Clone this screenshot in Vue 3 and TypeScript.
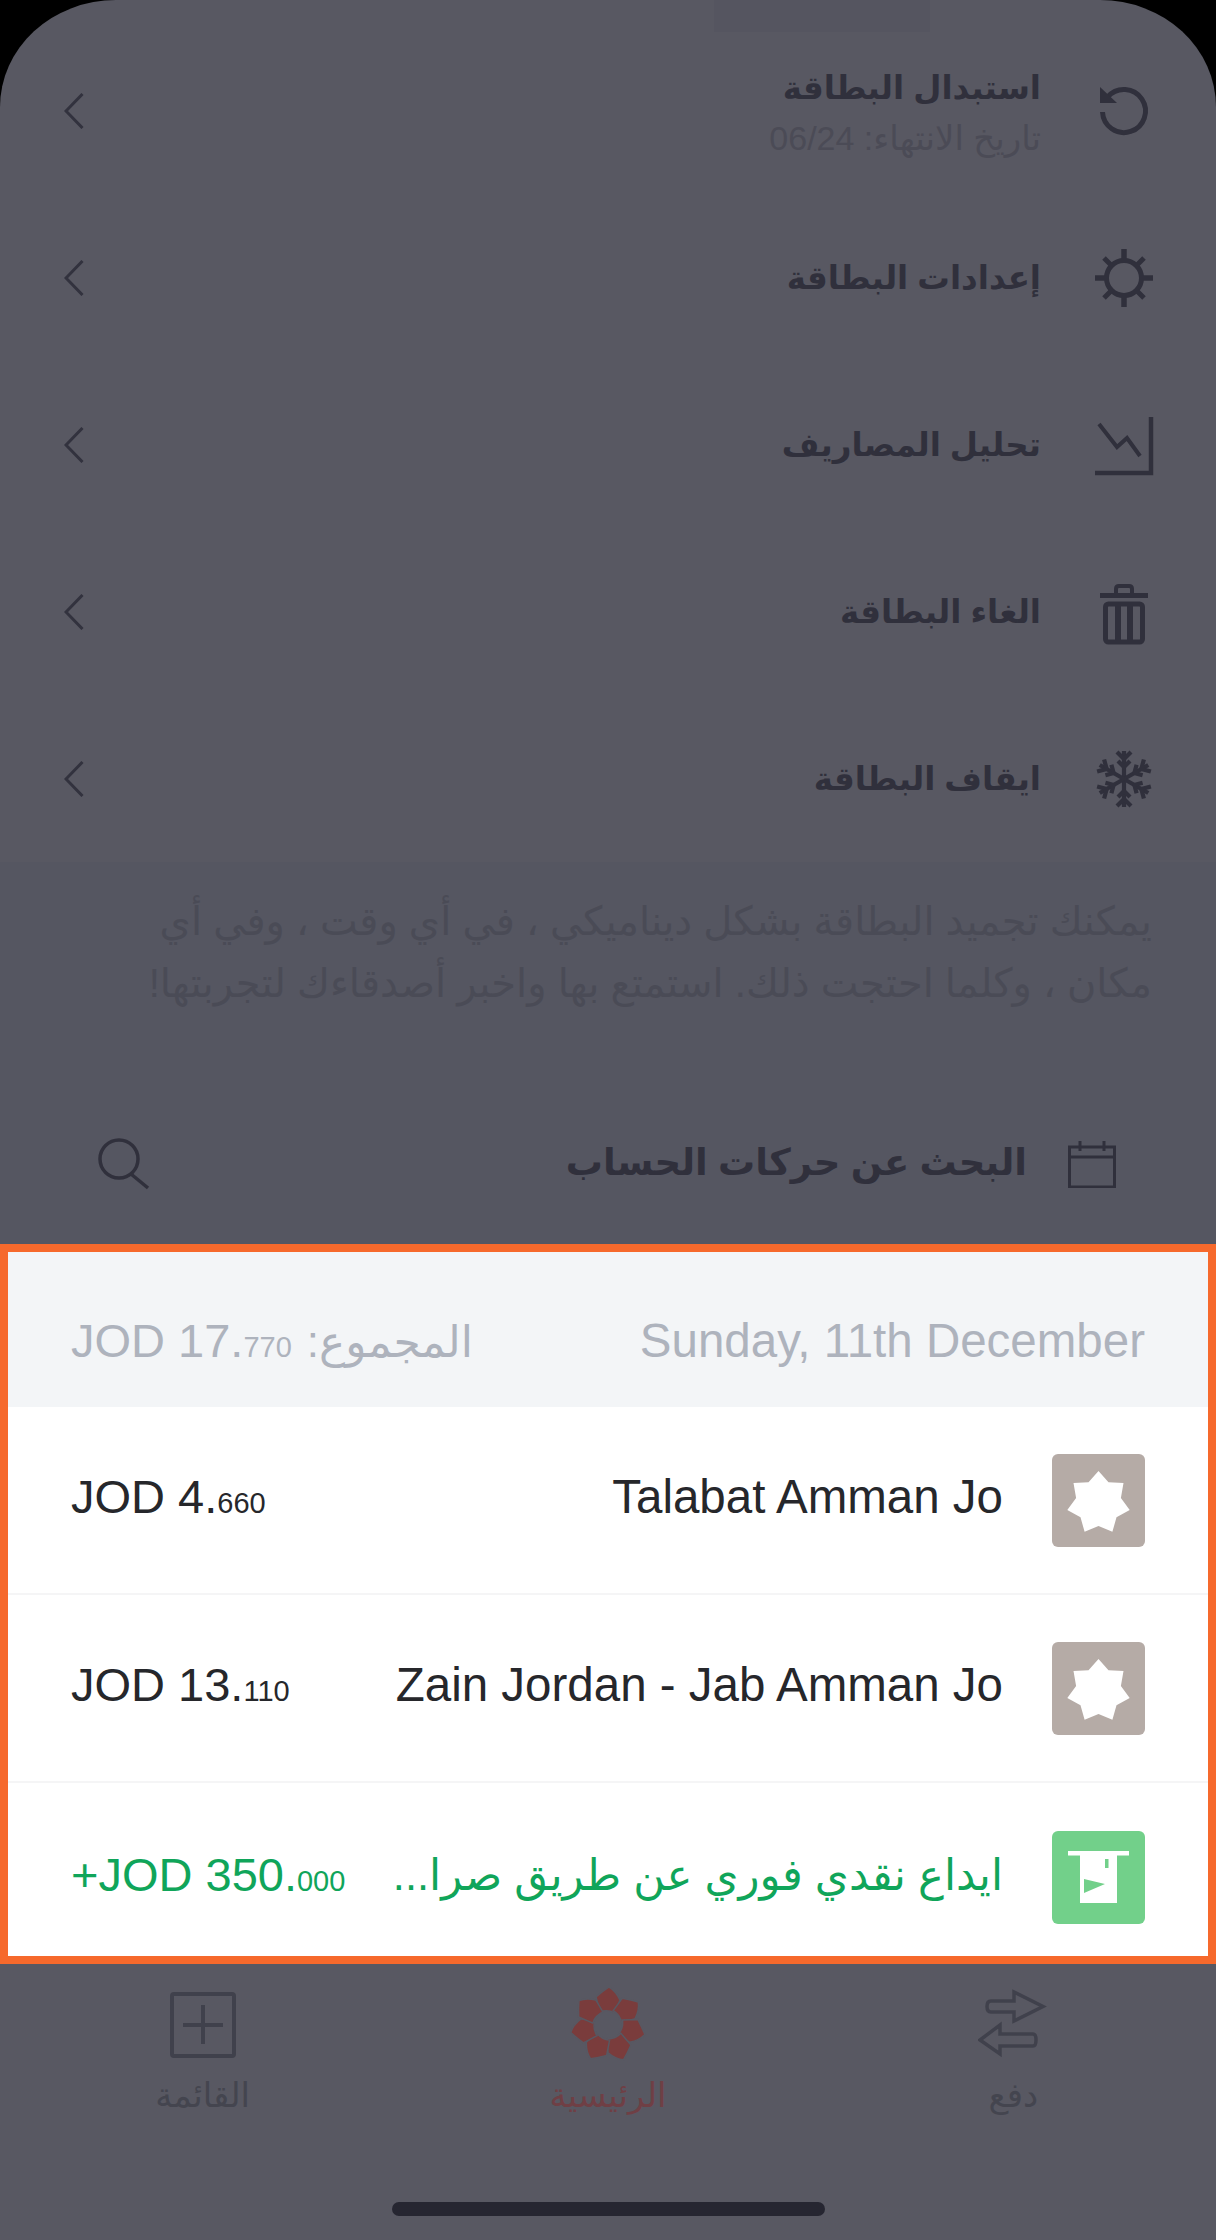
<script setup lang="ts">
/* شاشة البطاقة: قائمة الإجراءات خلف طبقة معتمة، ومقطع الحركات مضاء داخل إطار برتقالي */
interface CardAction {
  key: string
  title: string
  sub?: string
}

interface Movement {
  name: string
  whole: string
  fils: string
  kind: 'merchant' | 'deposit'
}

const actions: CardAction[] = [
  { key: 'renew', title: 'استبدال البطاقة', sub: 'تاريخ الانتهاء: 06/24' },
  { key: 'settings', title: 'إعدادات البطاقة' },
  { key: 'chart', title: 'تحليل المصاريف' },
  { key: 'trash', title: 'الغاء البطاقة' },
  { key: 'freeze', title: 'ايقاف البطاقة' },
]

const descLines = [
  'يمكنك تجميد البطاقة بشكل ديناميكي ، في أي وقت ، وفي أي',
  'مكان ، وكلما احتجت ذلك. استمتع بها واخبر أصدقاءك لتجربتها!',
]

const movements: Movement[] = [
  { name: 'Talabat Amman Jo', whole: 'JOD 4.', fils: '660', kind: 'merchant' },
  { name: 'Zain Jordan - Jab Amman Jo', whole: 'JOD 13.', fils: '110', kind: 'merchant' },
  { name: 'ايداع نقدي فوري عن طريق صرا...', whole: '+JOD 350.', fils: '000', kind: 'deposit' },
]

const rotations = (count: number) => Array.from({ length: count }, (_, i) => (360 / count) * i)

// نجمة سباعية بيضاء داخل مربع التاجر
const star = Array.from({ length: 14 }, (_, i) => {
  const r = i % 2 === 0 ? 32 : 23
  const a = (Math.PI / 7) * i
  return `${(46.5 + r * Math.sin(a)).toFixed(1)},${(49 - r * Math.cos(a)).toFixed(1)}`
}).join(' ')
</script>

<template>
  <div class="screen">
    <div class="top-strip"><span class="top-tab" /></div>

    <section class="actions">
      <div v-for="a in actions" :key="a.key" class="action">
        <svg class="action-icon" viewBox="0 0 60 60" fill="none" stroke="currentColor" stroke-width="5">
          <template v-if="a.key === 'renew'">
            <path d="M13.7 16A21.5 21.5 0 1 1 8.500 31" />
            <path d="M6 6V22H23Z" fill="currentColor" stroke="none" />
          </template>
          <template v-else-if="a.key === 'settings'">
            <circle cx="30" cy="30" r="17.500" />
            <path d="M30 1V11M30 49V59M1 30H11M49 30H59" stroke-width="5.500" />
            <path d="M10 10L17 17M50 10L43 17M10 50L17 43M50 50L43 43" stroke-width="5" />
          </template>
          <template v-else-if="a.key === 'chart'">
            <path d="M57 2V58H1" stroke-width="4.500" />
            <path d="M5 9L23 32L33 23L46 41" stroke-width="4" />
          </template>
          <template v-else-if="a.key === 'trash'">
            <path d="M6 13.500H54" />
            <path d="M22 11V7Q22 4 25 4H35Q38 4 38 7V11" stroke-width="4" />
            <rect x="11.500" y="22" width="37" height="38" rx="3" />
            <path d="M24 22V60M36 22V60" stroke-width="6" />
          </template>
          <template v-else>
            <g v-for="deg in rotations(6)" :key="deg" :transform="`rotate(${deg} 30 30)`" stroke-width="4.200">
              <path d="M30 30V2" />
              <path d="M23 3L30 10L37 3M24 12L30 18L36 12" />
            </g>
          </template>
        </svg>
        <div class="action-text">
          <div class="action-title">{{ a.title }}</div>
          <div v-if="a.sub" class="action-sub">{{ a.sub }}</div>
        </div>
        <svg class="chevron" viewBox="0 0 20 36" fill="none" stroke="currentColor" stroke-width="3">
          <path d="M18.500 1L2 18L18.500 35" />
        </svg>
      </div>
    </section>

    <section class="desc">
      <div v-for="line in descLines" :key="line">{{ line }}</div>
    </section>

    <section class="search">
      <svg class="cal-icon" viewBox="0 0 48 48" fill="none" stroke="currentColor" stroke-width="3">
        <rect x="1.500" y="7" width="45" height="40" />
        <path d="M1.500 17H46.500M12 1V11M36 1V11" />
      </svg>
      <div class="search-title">البحث عن حركات الحساب</div>
      <svg class="search-icon" viewBox="0 0 52 52" fill="none" stroke="currentColor" stroke-width="3.500">
        <circle cx="21" cy="21" r="19" />
        <path d="M33 36L50 50" />
      </svg>
    </section>

    <section class="frame">
      <header class="day">
        <span class="day-date">Sunday, 11th December</span>
        <span class="day-total">
          <span class="day-label">المجموع:</span>
          <bdi dir="ltr" class="amount">JOD 17.<small>770</small></bdi>
        </span>
      </header>

      <div v-for="m in movements" :key="m.name" class="move" :class="{ 'move-in': m.kind === 'deposit' }">
        <span class="thumb">
          <svg v-if="m.kind === 'merchant'" viewBox="0 0 93 93">
            <polygon :points="star" fill="#fff" />
          </svg>
          <svg v-else viewBox="0 0 93 93">
            <path d="M16 20H77V24.500H65V72H28V24.500H16Z" fill="#fff" />
            <path d="M53 28H56.500V37H53ZM32 48L53 53L32 62Z" fill="#72d08a" />
          </svg>
        </span>
        <span class="move-name">{{ m.name }}</span>
        <bdi dir="ltr" class="amount move-amount">{{ m.whole }}<small>{{ m.fils }}</small></bdi>
      </div>
    </section>

    <nav class="tabs">
      <div class="tab-row">
        <div class="tab">
          <svg class="tab-icon" viewBox="0 0 76 76" fill="none" stroke="currentColor" stroke-width="4">
            <rect x="7" y="7" width="62" height="62" rx="2" />
            <path d="M38 18V57M18 38H58" />
          </svg>
          <span class="tab-label">القائمة</span>
        </div>
        <div class="tab tab-active">
          <svg class="tab-icon" viewBox="2 2 76 76">
            <g v-for="deg in rotations(7)" :key="deg" :transform="`rotate(${deg} 40 40)`">
              <path
                d="M32 27L28 12Q35 6 41 2Q48 6 52 15L47 28Q39 24 32 27Z"
                fill="currentColor"
                stroke="#585862"
                stroke-width="1.500"
              />
            </g>
          </svg>
          <span class="tab-label">الرئيسية</span>
        </div>
        <div class="tab">
          <svg class="tab-icon" viewBox="0 0 70 76" fill="none" stroke="currentColor" stroke-width="3.500">
            <path d="M13 14H36V5L65 19.500L36 34V25H13Q9 25 9 19.500Q9 14 13 14Z" />
            <path d="M55 47H22V38L2 53L22 67V59H55Q58 59 58 53Q58 47 55 47Z" />
          </svg>
          <span class="tab-label">دفع</span>
        </div>
      </div>
      <span class="home-bar" />
    </nav>
  </div>
</template>

<style>
html,
body {
  background: #000;
  margin: 0;
}
</style>

<style scoped>
.screen {
  background: #585862;
  border-radius: 116px 116px 0 0 / 107px 107px 0 0;
  box-sizing: border-box;
  color: #30303c;
  direction: rtl;
  display: flex;
  flex-direction: column;
  font-family: "Liberation Sans", "DejaVu Sans", sans-serif;
  height: 2240px;
  overflow: hidden;
  position: relative;
  width: 1216px;
}

.top-strip {
  display: flex;
  height: 27px;
  padding-right: 286px;
}

.top-tab {
  background: #555560;
  height: 32px;
  width: 216px;
}

.actions {
  display: flex;
  flex-direction: column;
}

.action {
  align-items: center;
  display: flex;
  height: 167px;
  padding: 0 62px 0 64px;
}

.action-icon {
  flex: none;
  height: 60px;
  margin-left: 53px;
  overflow: visible;
  width: 60px;
}

.action-text {
  flex: 1;
}

.action-title {
  font-size: 32.500px;
  font-weight: 700;
  line-height: 48px;
}

.action-sub {
  color: #4b4b56;
  font-size: 34px;
  line-height: 40px;
  margin-top: 6px;
}

.chevron {
  color: #32323e;
  flex: none;
  height: 36px;
  width: 20px;
}

.desc {
  background: #555661;
  box-sizing: border-box;
  color: #4a4b56;
  font-size: 40px;
  height: 230px;
  line-height: 62px;
  padding: 28px 64px 0 0;
  white-space: nowrap;
}

.search {
  align-items: center;
  background: #555661;
  box-sizing: border-box;
  display: flex;
  height: 152px;
  padding: 0 100px 8px 98px;
}

.cal-icon {
  flex: none;
  height: 48px;
  margin-left: 41px;
  width: 48px;
}

.search-title {
  flex: 1;
  font-size: 37px;
  font-weight: 700;
  margin-bottom: 4px;
}

.search-icon {
  flex: none;
  height: 52px;
  width: 52px;
}

.frame {
  background: #fff;
  border: 8px solid #f6692c;
  box-sizing: border-box;
  display: flex;
  flex-direction: column;
  height: 720px;
}

.day {
  align-items: center;
  background: #f3f5f7;
  box-sizing: border-box;
  color: #aeb3bd;
  display: flex;
  flex: none;
  font-size: 47.500px;
  height: 155px;
  justify-content: space-between;
  padding: 22px 63px 0;
}

.day-total {
  align-items: baseline;
  display: flex;
  font-size: 47px;
  gap: 15px;
}

.day-label {
  font-size: 44px;
}

.amount small {
  font-size: 29px;
}

.move {
  align-items: center;
  border-bottom: 2px solid #f5f5f6;
  box-sizing: border-box;
  color: #26272b;
  display: flex;
  flex: none;
  font-size: 47.500px;
  height: 188px;
  padding: 0 63px;
}

.move-in {
  align-items: flex-start;
  border-bottom: 0;
  color: #10a55a;
  flex: 1;
  height: auto;
  padding-top: 48px;
}

.thumb {
  background: #b5aba6;
  border-radius: 6px;
  display: block;
  flex: none;
  height: 93px;
  margin-left: 49px;
  width: 93px;
}

.move-in .thumb {
  background: #72d08a;
}

.thumb svg {
  display: block;
  height: 93px;
  width: 93px;
}

.move-name {
  flex: 1;
  margin-bottom: 8px;
  white-space: nowrap;
}

.move-in .move-name {
  font-size: 43.500px;
  line-height: 88px;
  margin-bottom: 0;
}

.move-amount {
  font-size: 47px;
  margin-bottom: 8px;
}

.move-in .move-amount {
  line-height: 88px;
  margin-bottom: 0;
}

.tabs {
  align-items: center;
  display: flex;
  flex: 1;
  flex-direction: column;
  padding-bottom: 24px;
}

.tab-row {
  direction: ltr;
  display: grid;
  grid-template-columns: repeat(3, 1fr);
  padding-top: 23px;
  width: 100%;
}

.tab {
  align-items: center;
  color: #40414c;
  display: flex;
  flex-direction: column;
}

.tab-active {
  color: #7a3c3c;
}

.tab-icon {
  display: block;
  height: 76px;
}

.tab-label {
  color: #44454f;
  font-size: 34px;
  line-height: 40px;
  margin-top: 12px;
}

.tab-active .tab-label {
  color: #6f3f45;
}

.home-bar {
  background: #262631;
  border-radius: 7px;
  height: 14px;
  margin-top: auto;
  width: 433px;
}
</style>
